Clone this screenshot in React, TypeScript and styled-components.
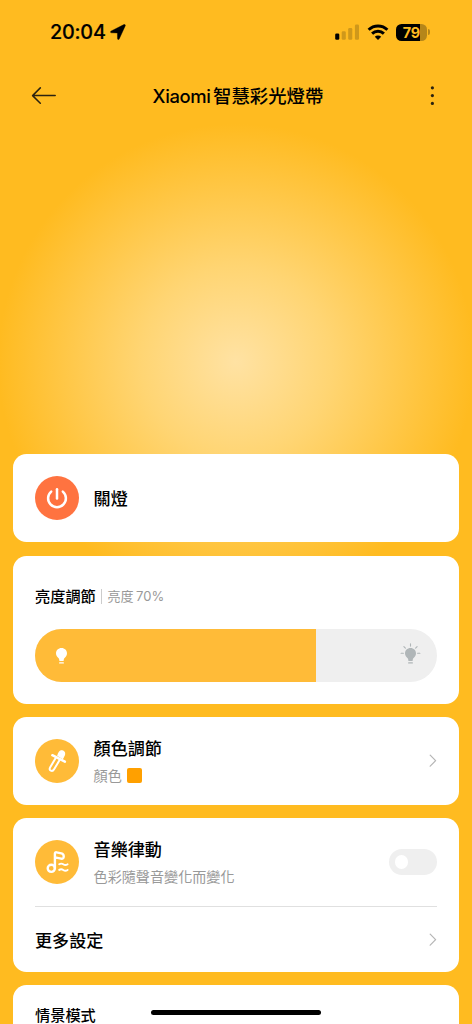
import React from "react";
import styled, { createGlobalStyle } from "styled-components";

const GlobalStyle = createGlobalStyle`
  *, *::before, *::after { box-sizing: border-box; }
  html, body { margin: 0; height: 1024px; overflow: hidden; }
  body { font-family: Inter, "Noto Sans CJK TC", sans-serif; color: #000; }
  svg { display: block; flex: none; }
`;

const Screen = styled.main`
  position: relative;
  width: 472px;
  height: 1024px;
  overflow: hidden;
  display: flex;
  flex-direction: column;
  background: radial-gradient(circle 238px at 236px 362px, #ffe2a3 0%, #ffd573 40%, #ffbb20 100%) #ffbb20;
`;

const StatusBar = styled.div`
  flex: none;
  height: 64px;
  display: flex;
  align-items: center;
  justify-content: space-between;
  padding: 0 42px 0 50px;
`;

const Clock = styled.div`
  display: flex;
  align-items: center;
  gap: 4px;
  font-size: 19.8px;
  font-weight: 500;
  letter-spacing: -0.2px;
  line-height: 24px;
  -webkit-text-stroke: 0.2px #000;
`;

const StatusIcons = styled.div`
  display: flex;
  align-items: center;
  gap: 7px;
`;

const BatteryWrap = styled.div`
  display: flex;
  align-items: center;
  gap: 1px;
`;

const Battery = styled.div`
  width: 31.5px;
  height: 17px;
  border-radius: 5.5px;
  display: flex;
  align-items: center;
  justify-content: center;
  background: linear-gradient(90deg, #000 78%, #b5861a 78%);
  color: #ffbb20;
  font-size: 14.5px;
  font-weight: 700;
  line-height: 17px;
  letter-spacing: -0.3px;
`;

const BatteryTip = styled.div`
  width: 2px;
  height: 6px;
  border-radius: 0 2px 2px 0;
  background: #b5861a;
`;

const NavBar = styled.header`
  flex: none;
  height: 64px;
  display: grid;
  grid-template-columns: 60px 1fr 60px;
  align-items: center;
  padding: 0 30px;
`;

const NavTitle = styled.h1`
  margin: 0;
  display: flex;
  justify-content: center;
  gap: 2.5px;
  padding-left: 4px;
  font-size: 18.4px;
  font-weight: 500;
  line-height: 26px;
  white-space: nowrap;
`;

const BrandName = styled.span`
  letter-spacing: -0.35px;
`;

const NavEnd = styled.div`
  display: flex;
  justify-content: flex-end;
  padding-right: 7px;
`;

const CardList = styled.div`
  margin-top: 326.4px;
  padding: 0 13px;
  display: flex;
  flex-direction: column;
  gap: 13.2px;
`;

const Card = styled.section<{ $height: number }>`
  flex: none;
  height: ${(p) => p.$height}px;
  padding: 0 22px;
  border-radius: 13.5px;
  background: #fff;
`;

const Row = styled.div<{ $height: number }>`
  height: ${(p) => p.$height}px;
  display: flex;
  align-items: center;
`;

const RoundIcon = styled.div<{ $color: string }>`
  flex: none;
  width: 44px;
  height: 44px;
  margin-right: 14.6px;
  border-radius: 50%;
  background: ${(p) => p.$color};
`;

const RowText = styled.div`
  flex: 1;
  display: flex;
  flex-direction: column;
  gap: 3px;
  padding-top: 1.6px;
`;

const RowTitle = styled.div`
  font-size: 17.1px;
  font-weight: 500;
  line-height: 25px;
`;

const RowNote = styled.div`
  display: flex;
  align-items: center;
  gap: 5px;
  font-size: 14.1px;
  font-weight: 400;
  line-height: 24px;
  color: #999;
`;

const Swatch = styled.span`
  width: 15.5px;
  height: 15.5px;
  margin-top: -1px;
  border-radius: 2px;
  background: #ffa000;
`;

const SectionHead = styled.div`
  display: flex;
  align-items: center;
  height: 24px;
`;

const SectionTitle = styled.h2`
  margin: 0;
  font-size: 15.2px;
  font-weight: 500;
  line-height: 24px;
`;

const Separator = styled.span`
  width: 1px;
  height: 15.5px;
  margin: 0 5.4px;
  background: #ccc;
`;

const SectionNote = styled.span`
  display: flex;
  gap: 2.5px;
  font-size: 13px;
  line-height: 24px;
  margin-top: -1px;
  color: #999;
`;

const BrightnessBody = styled.div`
  padding-top: 29px;
  display: flex;
  flex-direction: column;
  gap: 20.6px;
`;

const SliderTrack = styled.div`
  height: 53px;
  border-radius: 27px;
  overflow: hidden;
  display: flex;
  background: #efefef;
`;

const SliderFill = styled.div`
  width: 70%;
  display: flex;
  align-items: center;
  padding: 0 0 3.6px 16px;
  background: #ffbb38;
`;

const SliderRest = styled.div`
  flex: 1;
  display: flex;
  align-items: center;
  justify-content: flex-end;
  padding: 0 16px 3.6px 0;
`;

const Toggle = styled.div`
  flex: none;
  width: 48.4px;
  height: 26px;
  border-radius: 13px;
  padding: 6.5px;
  background: #efefef;
`;

const Knob = styled.div`
  width: 13.2px;
  height: 13.2px;
  border-radius: 50%;
  background: #fff;
`;

const Divider = styled.div`
  height: 1px;
  background: #e0e0e0;
`;

const SceneHead = styled.div`
  padding-top: 18.8px;
`;

const HomeIndicator = styled.div`
  position: absolute;
  left: 151px;
  top: 1009.5px;
  width: 170px;
  height: 5.5px;
  border-radius: 3px;
  background: #000;
`;

const LocationArrow = () => (
  <svg width="16" height="16" viewBox="0 0 16 16">
    <path d="M1.2 7 13.9.6c1-.5 1.8.3 1.3 1.3L9.2 15c-.5 1-1.7.7-1.7-.4L7.4 8.9 1.5 8.8C.3 8.8.1 7.6 1.2 7Z" fill="#000" stroke="#000" strokeWidth=".4" />
  </svg>
);

const Signal = () => (
  <svg width="25" height="17" viewBox="0 0 25 17">
    <rect x="0.2" y="9.4" width="4.1" height="6.3" rx="1.3" fill="#000" />
    <g fill="#cf981b">
      <rect x="6.7" y="7.2" width="4.1" height="8.5" rx="1.3" />
      <rect x="13.2" y="4" width="4.1" height="11.7" rx="1.3" />
      <rect x="19.9" y="0.6" width="4.1" height="15.1" rx="1.3" />
    </g>
  </svg>
);

const Wifi = () => (
  <svg width="22" height="17" viewBox="0 0 22 17" fill="none" stroke="#000" strokeWidth="2.9">
    <path d="M1.6 5.8a13.4 13.4 0 0 1 18.8 0" />
    <path d="M5.1 9.6a8.4 8.4 0 0 1 11.8 0" />
    <path d="M7.8 12.8a4.6 4.6 0 0 1 6.4 0L11 15.9Z" fill="#000" stroke="none" />
  </svg>
);

const BackArrow = () => (
  <svg width="28" height="18" viewBox="0 0 28 18" fill="none" stroke="#2b2310" strokeWidth="1.5" strokeLinecap="round" strokeLinejoin="round">
    <path d="M10.3.9 2.6 8.6l7.7 7.7M2.6 8.6H25.2" />
  </svg>
);

const MoreDots = () => (
  <svg width="6" height="22" viewBox="0 0 6 22" fill="#2b2310">
    <circle cx="3.4" cy="2.8" r="1.6" />
    <circle cx="3.4" cy="10.6" r="1.6" />
    <circle cx="3.4" cy="18.4" r="1.6" />
  </svg>
);

const PowerIcon = () => (
  <svg width="44" height="44" viewBox="0 0 44 44" fill="none" stroke="#fff" strokeWidth="2.5" strokeLinecap="round">
    <path d="M22 13.2v9.2" />
    <path d="M16.2 15.6a8.9 8.9 0 1 0 11.6 0" />
  </svg>
);

const DropperIcon = () => (
  <svg width="44" height="44" viewBox="0 0 44 44" fill="none" stroke="#fff" strokeLinecap="round" strokeLinejoin="round">
    <path d="M22.8 16.6c.8-2.4 1.7-4.3 3.3-4.7 2.2-.5 3.9 1.2 3.5 3.3-.2 1.1-1 2.5-1.9 4.2Z" fill="#fff" strokeWidth="1.2" />
    <path d="M17.3 16.2 29.9 22.6" strokeWidth="2.5" />
    <path d="M21 18.6 15.2 28.2c-1 1.7-.6 2.9.6 3.5 1.2.6 2.4.2 3.3-1.4L24.9 20.6" strokeWidth="2" />
  </svg>
);

const MusicIcon = () => (
  <svg width="44" height="44" viewBox="0 0 44 44" fill="none" stroke="#fff" strokeWidth="2.4" strokeLinecap="round" strokeLinejoin="round">
    <circle cx="16.3" cy="28.3" r="3.6" />
    <path d="M19.9 28.2V13.6c0-1.1.7-1.5 1.6-1.3l4.9 1.1c1.6.4 2.3 1.4 2.3 2.8v.5c0 1.6-1 2.2-2.6 1.9L20 17.4" />
    <path d="M24.2 24.3c1.5-1 2.6-1 4 0s3 1 4.4 0" strokeWidth="1.9" />
    <path d="M24.2 29.9c1.5-1 2.6-1 4 0s3 1 4.4 0" strokeWidth="1.9" />
  </svg>
);

const Bulb = ({ color, rays = false }: { color: string; rays?: boolean }) => (
  <svg width="21" height="22" viewBox="0 0 21 22">
    <path d="M10.5 5C7.3 5 5 7.4 5 10.3c0 2.1 1.1 3.5 2.4 4.6.6.5.8.9.8 1.6v.7c0 .4.3.7.7.7h3.2c.4 0 .7-.3.7-.7v-.7c0-.7.2-1.1.8-1.6 1.3-1.1 2.4-2.5 2.4-4.6C16 7.4 13.7 5 10.5 5Z" fill={color} />
    <path d="M8.6 19.9h3.8" stroke={color} strokeWidth="1.1" strokeLinecap="round" />
    {rays && (
      <path d="M10.5.9v2.2M3.9 3.6l1.5 1.5M17.1 3.6l-1.5 1.5M1.1 10.3h2.3M17.6 10.3h2.3" stroke={color} strokeWidth="1.1" strokeLinecap="round" />
    )}
  </svg>
);

const Chevron = () => (
  <svg width="8" height="13" viewBox="0 0 8 13" fill="none" stroke="#b5b5b5" strokeWidth="1.2" strokeLinecap="round" strokeLinejoin="round">
    <path d="M1.2 1.2 6.6 6.7 1.2 12.2" />
  </svg>
);

export default function App() {
  return (
    <>
      <GlobalStyle />
      <Screen>
        <StatusBar>
          <Clock>
            <span>20:04</span>
            <LocationArrow />
          </Clock>
          <StatusIcons>
            <Signal />
            <Wifi />
            <BatteryWrap>
              <Battery>79</Battery>
              <BatteryTip />
            </BatteryWrap>
          </StatusIcons>
        </StatusBar>
        <NavBar>
          <BackArrow />
          <NavTitle>
            <BrandName>Xiaomi</BrandName>
            <span>智慧彩光燈帶</span>
          </NavTitle>
          <NavEnd>
            <MoreDots />
          </NavEnd>
        </NavBar>
        <CardList>
          <Card $height={88}>
            <Row $height={88}>
              <RoundIcon $color="#ff7340"><PowerIcon /></RoundIcon>
              <RowTitle>關燈</RowTitle>
            </Row>
          </Card>
          <Card $height={148.2}>
            <BrightnessBody>
              <SectionHead>
                <SectionTitle>亮度調節</SectionTitle>
                <Separator />
                <SectionNote>
                  <span>亮度</span>
                  <span>70%</span>
                </SectionNote>
              </SectionHead>
              <SliderTrack>
                <SliderFill><Bulb color="#fff" /></SliderFill>
                <SliderRest><Bulb color="#b0b6b8" rays /></SliderRest>
              </SliderTrack>
            </BrightnessBody>
          </Card>
          <Card $height={88}>
            <Row $height={88}>
              <RoundIcon $color="#ffbb38"><DropperIcon /></RoundIcon>
              <RowText>
                <RowTitle>顏色調節</RowTitle>
                <RowNote>
                  <span>顏色</span>
                  <Swatch />
                </RowNote>
              </RowText>
              <Chevron />
            </Row>
          </Card>
          <Card $height={153.8}>
            <Row $height={87.7}>
              <RoundIcon $color="#ffbb38"><MusicIcon /></RoundIcon>
              <RowText>
                <RowTitle>音樂律動</RowTitle>
                <RowNote>色彩隨聲音變化而變化</RowNote>
              </RowText>
              <Toggle><Knob /></Toggle>
            </Row>
            <Divider />
            <Row $height={65}>
              <RowText>
                <RowTitle>更多設定</RowTitle>
              </RowText>
              <Chevron />
            </Row>
          </Card>
          <Card $height={148}>
            <SceneHead>
              <SectionTitle>情景模式</SectionTitle>
            </SceneHead>
          </Card>
        </CardList>
        <HomeIndicator />
      </Screen>
    </>
  );
}
